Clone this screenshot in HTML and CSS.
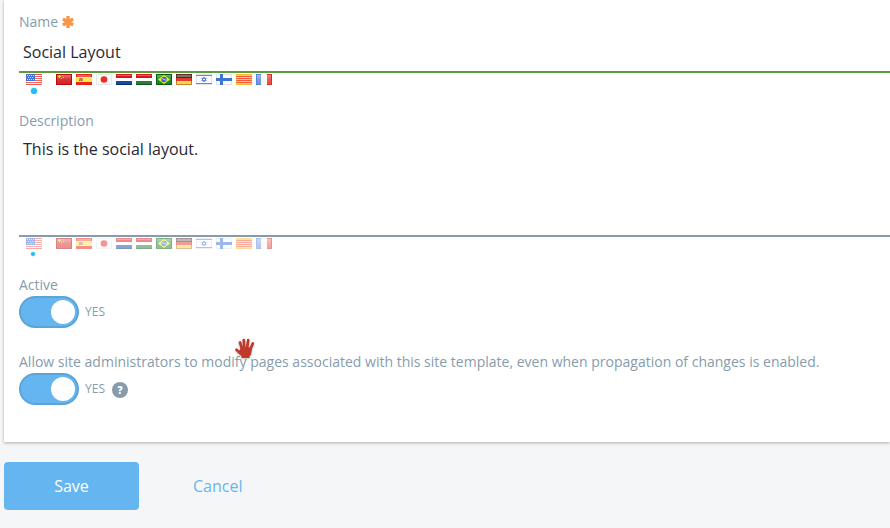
FILE: index.html
```
<!DOCTYPE html>
<html lang="en">
<head>
<meta charset="utf-8">
<title>Site Template</title>
<link rel="stylesheet" href="styles.css">
</head>
<body>
<svg class="sprites" aria-hidden="true">
  <defs>
    <linearGradient id="shine" x1="0" y1="0" x2="0" y2="1">
      <stop offset="0" stop-color="#fff" stop-opacity=".35"/>
      <stop offset=".5" stop-color="#fff" stop-opacity=".08"/>
      <stop offset="1" stop-color="#fff" stop-opacity="0"/>
    </linearGradient>
  </defs>
  <symbol id="us" viewBox="0 0 16 11">
    <path fill="#fff" d="M0 0h16v11H0z"/>
    <path fill="#f0645a" d="M0 0h16v1H0zM0 2h16v1H0zM0 4h16v1H0zM0 6h16v1H0zM0 8h16v1H0zM0 10h16v1H0z"/>
    <path fill="#3f74e0" d="M0 0h9v7H0z"/>
    <path fill="#d5e0fa" d="M1 1h1v1H1zM3 1h1v1H3zM5 1h1v1H5zM7 1h1v1H7zM2 3h1v1H2zM4 3h1v1H4zM6 3h1v1H6zM1 5h1v1H1zM3 5h1v1H3zM5 5h1v1H5zM7 5h1v1H7z"/>
    <path fill="none" stroke="#a33" stroke-opacity=".15" d="M.5.5h15v10H.5z"/>
  </symbol>
  <symbol id="cn" viewBox="0 0 16 11">
    <path fill="#d52320" d="M0 0h16v11H0z"/><path fill="url(#shine)" d="M1 1h14v9H1z"/>
    <path fill="#f6d435" d="M3 1h1v1h1v1H4v1H3V3H2V2h1zM6 1h1v1H6zM7 3h1v1H7zM5 4h1v1H5z"/>
    <path fill="none" stroke="#b50c0c" d="M.5.5h15v10H.5z"/>
  </symbol>
  <symbol id="es" viewBox="0 0 16 11">
    <path fill="#ea2219" d="M0 0h16v11H0z"/><path fill="#ffe62e" d="M0 3h16v5H0z"/>
    <path fill="url(#shine)" d="M1 1h14v9H1z"/>
    <path fill="#d79555" d="M3 4h4v3H3z"/><path fill="#bc4f42" d="M4 4h1v1H4zM5 5h1v2H5zM3 6h1v1H3z"/>
  </symbol>
  <symbol id="jp" viewBox="0 0 16 11">
    <path fill="#f8f8f8" d="M0 0h16v11H0z"/><circle cx="8" cy="5.5" r="3.3" fill="#ed292d"/>
    <path fill="none" stroke="#e8e8e8" d="M.5.5h15v10H.5z"/>
  </symbol>
  <symbol id="nl" viewBox="0 0 16 11">
    <path fill="#d9161b" d="M0 0h16v4H0z"/><path fill="#f0625f" d="M1 1h14v1H1z"/>
    <path fill="#fff" d="M0 4h16v3H0z"/><path fill="#174ba0" d="M0 7h16v4H0z"/>
    <path fill="#003078" d="M0 10h16v1H0z"/>
  </symbol>
  <symbol id="hu" viewBox="0 0 16 11">
    <path fill="#d9161b" d="M0 0h16v4H0z"/><path fill="#f0625f" d="M1 1h14v1H1z"/>
    <path fill="#fff" d="M0 4h16v3H0z"/><path fill="#2e7840" d="M0 7h16v4H0z"/>
    <path fill="#075a1a" d="M0 10h16v1H0z"/>
  </symbol>
  <symbol id="br" viewBox="0 0 16 11">
    <path fill="#148420" d="M0 0h16v11H0z"/><path fill="url(#shine)" d="M1 1h14v9H1z"/>
    <path fill="#f7ec30" d="M8 1l6 4.5L8 10 2 5.500z"/><circle cx="8" cy="5.500" r="2.700" fill="#3467c8"/>
    <path stroke="#c6dcf6" d="M6 4.500l4 1.800"/>
    <path fill="none" stroke="#06600c" d="M.5.5h15v10H.5z"/>
  </symbol>
  <symbol id="de" viewBox="0 0 16 11">
    <path fill="#333" d="M0 0h16v4H0z"/><path fill="#787878" d="M1 1h14v2H1z"/>
    <path fill="#e83c2c" d="M0 4h16v3H0z"/><path fill="#f8da48" d="M0 7h16v4H0z"/>
    <path fill="none" stroke="#8e2418" stroke-opacity=".5" d="M.5.5h15v10H.5z"/>
  </symbol>
  <symbol id="il" viewBox="0 0 16 11">
    <path fill="#fafaff" d="M0 0h16v11H0z"/><path fill="none" stroke="#dfe2ed" d="M.5.5h15v10H.5z"/>
    <path fill="#6482ed" d="M0 1h16v1H0zM0 9h16v1H0z"/>
    <path fill="none" stroke="#5274e5" stroke-width=".9" d="M8 3.200l2.200 3.500H5.800zM8 7.900L5.800 4.400h4.400z"/>
  </symbol>
  <symbol id="fi" viewBox="0 0 16 11">
    <path fill="#fafafa" d="M0 0h16v11H0z"/><path fill="none" stroke="#dde3ee" d="M.5.5h15v10H.5z"/>
    <path fill="#3f74d4" d="M4 0h3v4h9v3H7v4H4V7H0V4h4z"/>
  </symbol>
  <symbol id="ca" viewBox="0 0 16 11">
    <path fill="#ffdc2d" d="M0 0h16v11H0z"/>
    <path fill="#f0593a" d="M0 2h16v1H0zM0 4h16v1H0zM0 6h16v1H0zM0 8h16v1H0z"/>
    <path fill="none" stroke="#f0a32a" stroke-opacity=".6" d="M.5.5h15v10H.5z"/>
  </symbol>
  <symbol id="fr" viewBox="0 0 16 11">
    <path fill="#6b94e6" d="M0 0h6v11H0z"/><path fill="#f8f8f8" d="M5 0h6v11H5z"/><path fill="#ee4a42" d="M11 0h5v11h-5z"/>
    <path fill="url(#shine)" d="M1 1h14v9H1z"/>
    <path fill="none" stroke="#345bb7" stroke-opacity=".3" d="M5 .5H.5v10H5"/><path fill="none" stroke="#c41616" stroke-opacity=".6" d="M11 .5h4.500v10H11"/>
  </symbol>
</svg>

<main class="card">
  <section class="field name">
    <label class="label" for="name">Name
      <svg class="required" viewBox="0 0 12 12"><path d="M6 0v12M.9 3.050l10.200 5.900M.9 8.950l10.200-5.900"/></svg>
    </label>
    <input class="control" id="name" value="Social Layout">
    <div class="flags">
      <svg class="current"><use href="#us"/></svg>
      <svg><use href="#cn"/></svg><svg><use href="#es"/></svg><svg><use href="#jp"/></svg><svg><use href="#nl"/></svg><svg><use href="#hu"/></svg><svg><use href="#br"/></svg><svg><use href="#de"/></svg><svg><use href="#il"/></svg><svg><use href="#fi"/></svg><svg><use href="#ca"/></svg><svg><use href="#fr"/></svg>
    </div>
    <span class="dot"></span>
  </section>

  <section class="field description">
    <label class="label" for="description">Description</label>
    <textarea class="control" id="description">This is the social layout.</textarea>
    <div class="flags faded">
      <svg class="current"><use href="#us"/></svg>
      <svg><use href="#cn"/></svg><svg><use href="#es"/></svg><svg><use href="#jp"/></svg><svg><use href="#nl"/></svg><svg><use href="#hu"/></svg><svg><use href="#br"/></svg><svg><use href="#de"/></svg><svg><use href="#il"/></svg><svg><use href="#fi"/></svg><svg><use href="#ca"/></svg><svg><use href="#fr"/></svg>
    </div>
    <span class="dot small"></span>
  </section>

  <section class="field active">
    <span class="label">Active</span>
    <div class="switch-row"><span class="switch"></span><span class="state">YES</span></div>
  </section>

  <section class="field">
    <span class="label modify">Allow site administrators to modify pages associated with this site template, even when propagation of changes is enabled.</span>
    <div class="switch-row"><span class="switch"></span><span class="state">YES</span><span class="help">?</span></div>
  </section>
</main>

<div class="actions">
  <button class="save">Save</button>
  <a class="cancel">Cancel</a>
</div>

<svg class="hand" viewBox="0 0 20 22"><path class="palm" d="M5.500 10.500L8 9h5.500l3.500 2-1 5.500-1.500 2V20H6.500v-2L3.500 14z"/><path class="fingers" d="M1.500 11.800L6 16M5 4.500L7.300 12M8.800 2L9.300 11M13.200 2.200L12 11M17.800 5.500L14.800 12.500"/></svg>
</body>
</html>
```
FILE: styles.css
```
* {
  box-sizing: border-box;
}

body {
  margin: 0;
  height: 528px;
  overflow: hidden;
  background: #f5f6f8;
  font-family: "Open Sans", "Noto Sans", sans-serif;
  color: #869cad;
}

.sprites {
  position: absolute;
  width: 0;
  height: 0;
}

.card {
  height: 442px;
  margin-left: 4px;
  padding: 12px 0 0 15px;
  background: #fff;
  box-shadow: 0 1px 3px rgba(0, 0, 0, .3);
}

.field {
  display: flex;
  flex-direction: column;
}

.name { height: 99px; }
.description { height: 164px; }
.active { height: 77px; }

.label {
  display: flex;
  align-items: center;
  gap: 4px;
  height: 20px;
  font-size: 14px;
  line-height: 20px;
  white-space: nowrap;
}

.modify { letter-spacing: .006px; }

.required {
  width: 12px;
  height: 12px;
  fill: none;
  stroke: #f79646;
  stroke-width: 3.3;
}

.control {
  display: block;
  width: 100%;
  height: 41px;
  margin: 0;
  padding: 0 4px;
  border: 0;
  border-bottom: 2px solid #5c9a3c;
  border-radius: 0;
  outline: 0;
  background: transparent;
  color: #272833;
  font: 16px/24px "Open Sans", "Noto Sans", sans-serif;
  resize: none;
}

.description .control {
  height: 106px;
  padding-top: 6px;
  border-bottom-color: #869cad;
}

.flags {
  display: flex;
  gap: 4px;
  padding: 1px 0 0 7px;
}

.flags svg {
  display: block;
  width: 16px;
  height: 11px;
}

.flags .current { margin-right: 10px; }
.faded { opacity: .5; }

.dot {
  width: 6px;
  height: 6px;
  margin: 3px 0 0 12px;
  border-radius: 50%;
  background: #27bdf2;
  box-shadow: 0 0 2px #5fcff8;
}

.dot.small {
  width: 4px;
  height: 4px;
}

.switch-row {
  display: flex;
  align-items: center;
  height: 32px;
  margin-top: 1px;
}

.switch {
  display: flex;
  align-items: center;
  justify-content: flex-end;
  width: 60px;
  height: 32px;
  padding-right: 2px;
  border: 2px solid #5ba4d8;
  border-radius: 16px;
  background: #65b6f0;
}

.switch::after {
  content: "";
  width: 24px;
  height: 24px;
  border-radius: 50%;
  background: #fff;
}

.state {
  margin-left: 6px;
  font-size: 12px;
  line-height: 16px;
}

.help {
  width: 16px;
  height: 16px;
  margin: 2px 0 0 7px;
  border-radius: 50%;
  background: #869cad;
  color: #fff;
  font-size: 10px;
  font-weight: 800;
  line-height: 16px;
  text-align: center;
}

.actions {
  display: flex;
  align-items: center;
  gap: 54px;
  margin: 20px 0 0 4px;
  font-size: 16px;
  line-height: 24px;
}

.save {
  width: 135px;
  height: 48px;
  padding: 0;
  border: 0;
  border-radius: 4px;
  background: #65b6f0;
  color: #fff;
  font: inherit;
}

.cancel { color: #65b6f0; }

/* Pointer floating over the form */
.hand {
  position: absolute;
  left: 235px;
  top: 338px;
  width: 20px;
  height: 22px;
  fill: #c0392b;
  filter: drop-shadow(0 1px 1px rgba(0, 0, 0, .25));
}

.fingers {
  fill: none;
  stroke: #c0392b;
  stroke-width: 2.7;
  stroke-linecap: round;
}
```
